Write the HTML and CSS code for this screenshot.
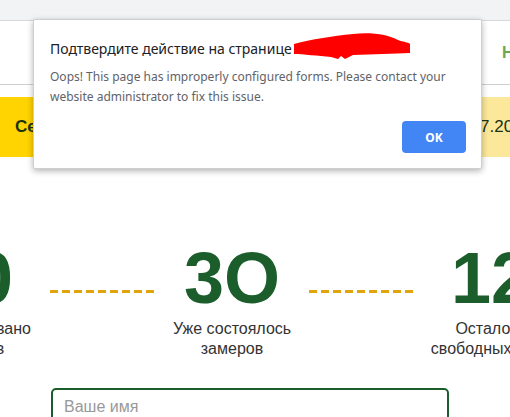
FILE: index.html
```html
<!DOCTYPE html>
<html lang="ru">
<head>
    <meta charset="UTF-8">
    <meta name="viewport" content="width=device-width, initial-scale=1.0">
    <title>Замеры</title>
    <link rel="stylesheet" href="styles.css">
</head>
<body>

    <div class="topbar"></div>

    <header class="header">
        <a class="header-link" href="#">Написать нам</a>
    </header>

    <div class="banner">
        <div class="banner-left">Сегодня бесплатный замер</div>
        <div class="banner-right">Акция до 31.07.2021</div>
    </div>

    <section class="stats">
        <div class="stat">
            <div class="stat-num">50</div>
            <div class="stat-label">Запланировано<br>замеров</div>
        </div>
        <div class="stat-dash"></div>
        <div class="stat">
            <div class="stat-num">3O</div>
            <div class="stat-label">Уже состоялось<br>замеров</div>
        </div>
        <div class="stat-dash"></div>
        <div class="stat">
            <div class="stat-num">12</div>
            <div class="stat-label">Осталось<br>свободных мест</div>
        </div>
    </section>

    <form class="order-form">
        <input class="order-input" type="text" placeholder="Ваше имя">
    </form>

    <div class="dialog">
        <div class="dialog-title">Подтвердите действие на странице site.ru</div>
        <svg class="dialog-mark" width="120" height="28" viewBox="0 0 120 28">
            <path d="M1 12 C 15 8, 40 4, 60 2 C 80 0, 95 3, 105 8 C 110 10, 115 10, 117 12 L 117 21 C 100 22, 80 22, 60 23 L 52 27 L 48 24 L 45 27 L 38 25 C 25 24, 10 22, 1 22 Z" fill="#ff0000"/>
        </svg>
        <p class="dialog-text">Oops! This page has improperly configured forms. Please contact your website administrator to fix this issue.</p>
        <div class="dialog-actions">
            <button class="dialog-ok" type="button">OK</button>
        </div>
    </div>

</body>
</html>
```

FILE: styles.css
```css
body {
    margin: 0;
    padding: 0;
    width: 510px;
    height: 417px;
    overflow: hidden;
    position: relative;
    font-family: "Liberation Sans", Arial, sans-serif;
    background: #fff;
}
.topbar {
    height: 20px;
    background: #f1f3f4;
    border-bottom: 1px solid #d6d8da;
}
.header {
    height: 63px;
    border-bottom: 1px solid #cfcfcf;
    display: flex;
    align-items: center;
    white-space: nowrap;
}
.header-link {
    margin-left: 502px;
    color: #6aa84f;
    font-weight: bold;
    font-size: 16px;
    text-decoration: none;
}
.banner {
    margin-top: 12px;
    height: 60px;
    display: flex;
    white-space: nowrap;
}
.banner-left {
    width: 250px;
    background: #ffd400;
    color: #1c3210;
    font-weight: bold;
    font-size: 17px;
    line-height: 60px;
    padding-left: 15px;
    overflow: hidden;
}
.banner-right {
    flex: 1;
    background: #fbe89a;
    color: #1c3210;
    font-size: 17px;
    line-height: 60px;
    padding-left: 106px;
    overflow: hidden;
}
.stats {
    display: flex;
    align-items: flex-start;
    gap: 12px;
    margin-top: 85px;
    margin-left: -92px;
    width: 700px;
}
.stat {
    width: 130px;
    flex-shrink: 0;
    text-align: center;
}
.stat-num {
    font-size: 72px;
    line-height: 72px;
    font-weight: bold;
    color: #1b5e2b;
}
.stat-label {
    margin-top: 5px;
    font-size: 16px;
    line-height: 20px;
    color: #333;
    white-space: nowrap;
}
.stat-dash {
    width: 105px;
    height: 3px;
    flex-shrink: 0;
    margin-top: 48px;
    background: repeating-linear-gradient(90deg, #e2a40c 0 8px, transparent 8px 12px);
}
.order-form {
    margin-top: 29px;
    padding-left: 51px;
}
.order-input {
    width: 398px;
    height: 46px;
    box-sizing: border-box;
    border: 2px solid #1b5e2b;
    border-radius: 5px;
    padding: 0 11px 8px;
    font-family: "Liberation Sans", Arial, sans-serif;
    font-size: 16px;
    outline: none;
}
.order-input::placeholder {
    color: #999;
}
.dialog {
    position: absolute;
    left: 33px;
    top: 19px;
    width: 449px;
    height: 150px;
    box-sizing: border-box;
    background: #fff;
    border: 1px solid #cfcfcf;
    border-radius: 2px;
    box-shadow: 0 2px 6px rgba(0, 0, 0, 0.3);
    padding: 18px 15px 0 16px;
    font-family: "Noto Sans", "Open Sans", sans-serif;
}
.dialog-title {
    font-size: 14px;
    line-height: 22px;
    color: #202124;
    white-space: nowrap;
}
.dialog-mark {
    position: absolute;
    left: 259px;
    top: 12px;
}
.dialog-text {
    margin: 7px 0 0;
    font-size: 12px;
    line-height: 20px;
    color: #5f6368;
}
.dialog-actions {
    display: flex;
    justify-content: flex-end;
    margin-top: 14px;
}
.dialog-ok {
    width: 64px;
    height: 32px;
    border: none;
    border-radius: 4px;
    background: #4285f4;
    color: #fff;
    font-family: "Noto Sans", "Open Sans", sans-serif;
    font-weight: bold;
    font-size: 12px;
}
```
